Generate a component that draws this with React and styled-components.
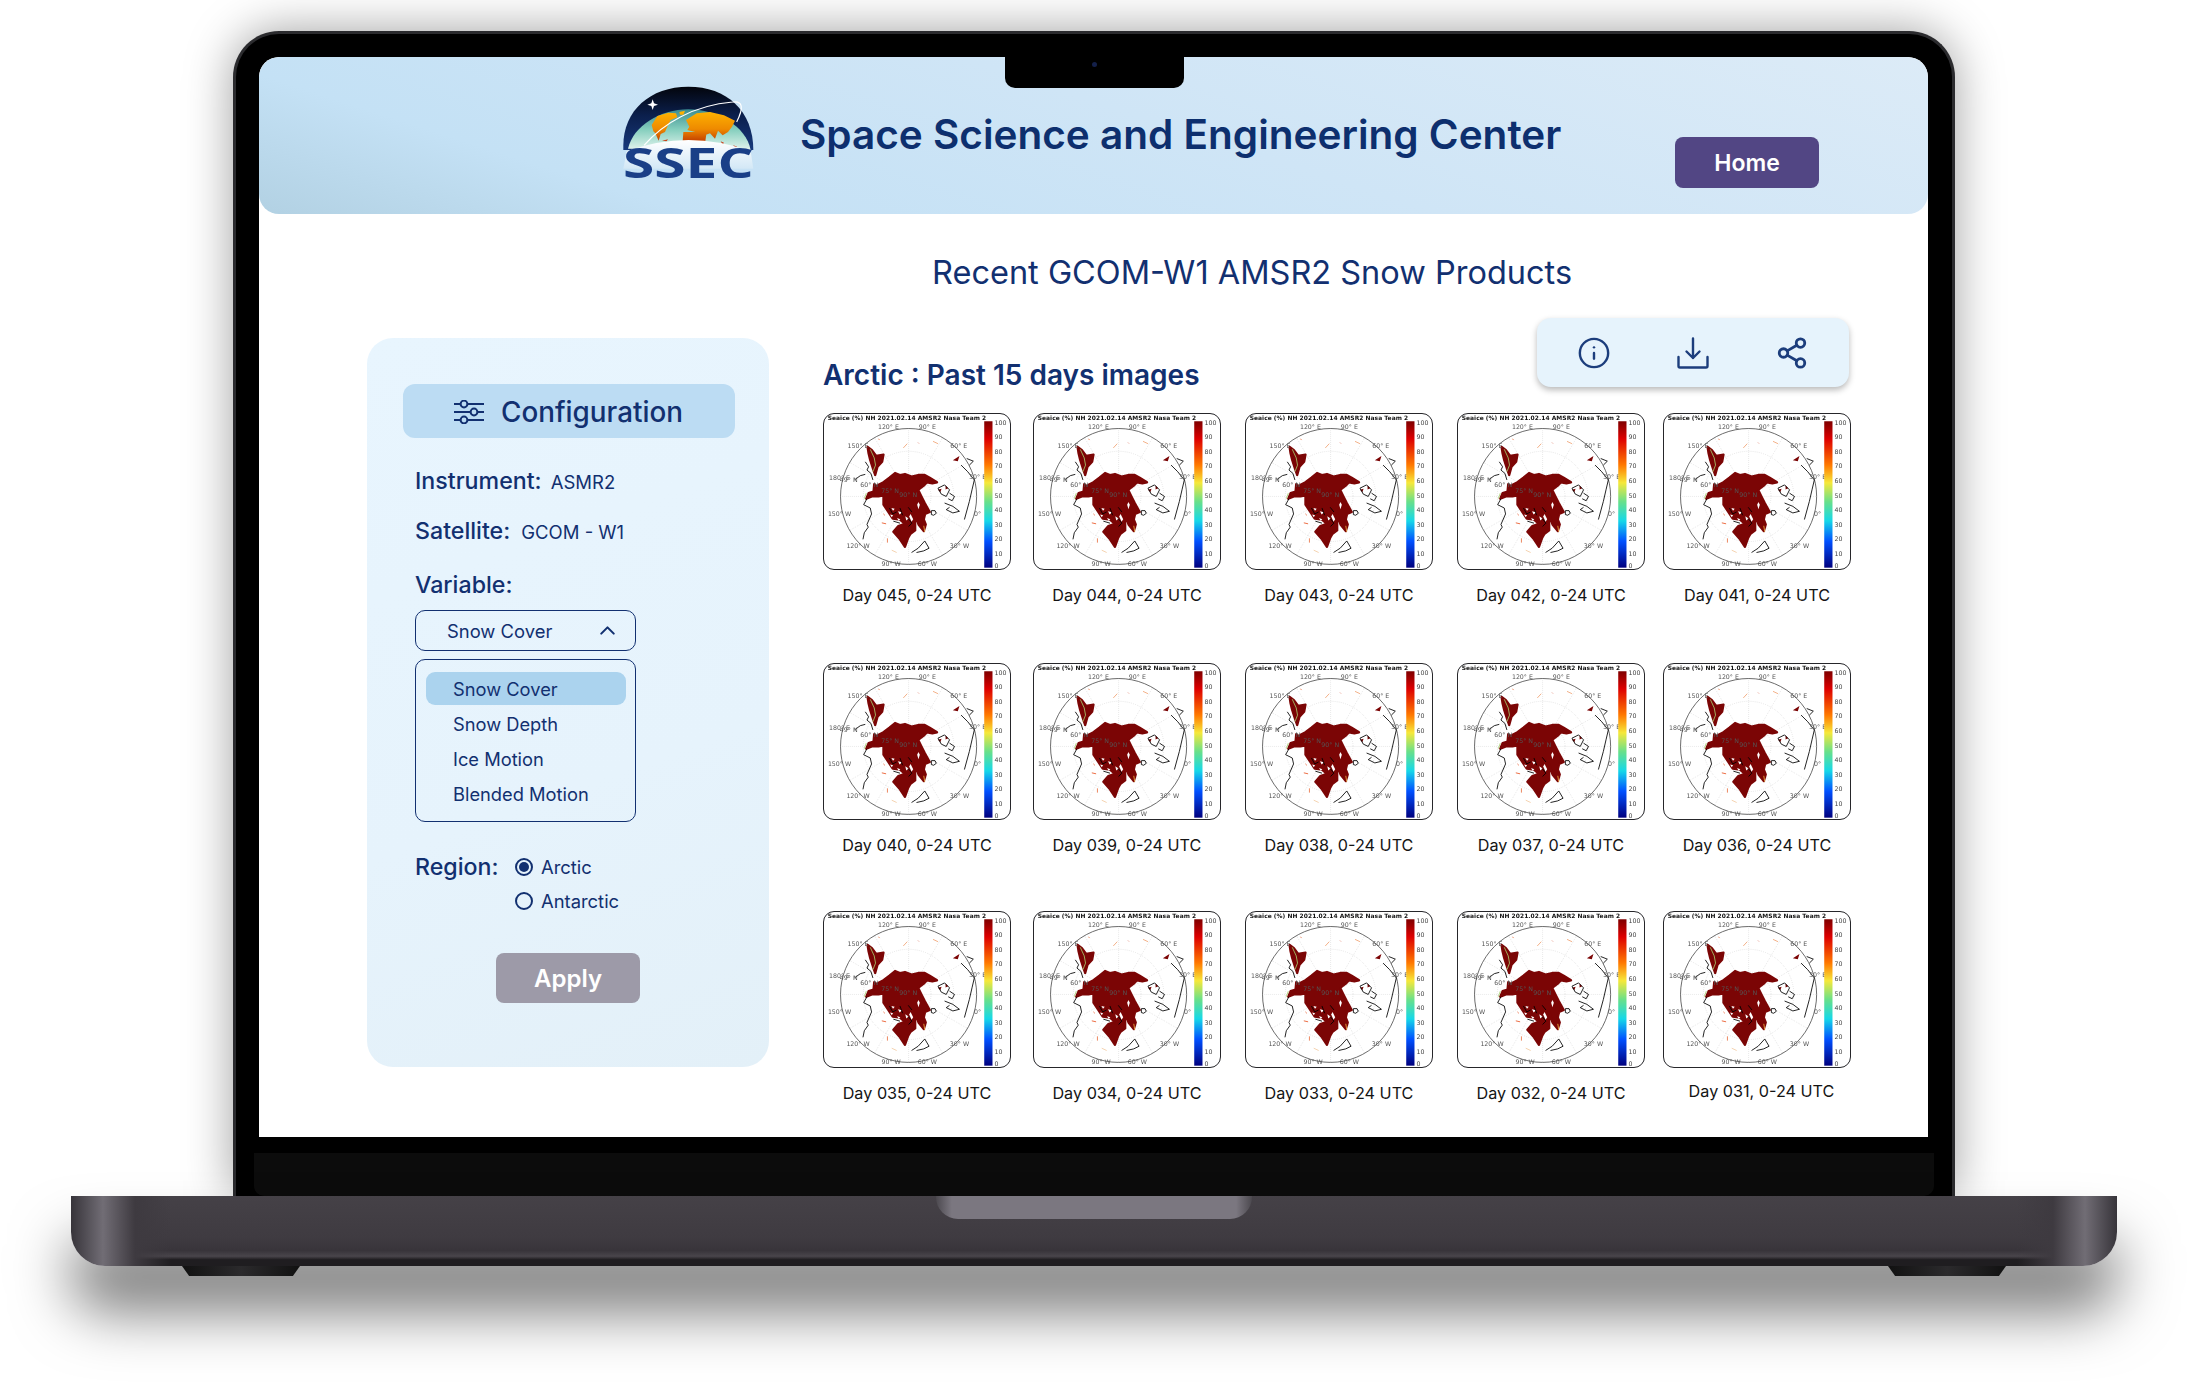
import React from 'react';
import styled, { createGlobalStyle } from 'styled-components';
import { Info, Share2, ChevronUp } from 'lucide-react';

const GlobalStyle = createGlobalStyle`
  html, body {
    margin: 0;
    padding: 0;
    background: #ffffff;
  }
  * {
    box-sizing: border-box;
  }
`;

const Page = styled.div`
  width: 2188px;
  height: 1387px;
  padding-top: 31px;
  overflow: hidden;
  display: flex;
  flex-direction: column;
  align-items: center;
  background: #ffffff;
  font-family: Inter, 'Liberation Sans', sans-serif;
`;

const Lid = styled.div`
  position: relative;
  width: 1722px;
  height: 1165px;
  padding: 23px 23px 0;
  display: flex;
  flex-direction: column;
  background: #000000;
  border: 3px solid #2b2b2e;
  border-bottom: 0;
  border-radius: 46px 46px 0 0;
  box-shadow: 0 0 48px rgba(0, 0, 0, 0.38);
`;

const Notch = styled.div`
  position: absolute;
  top: 23px;
  left: 769px;
  width: 179px;
  height: 31px;
  display: flex;
  justify-content: center;
  padding-top: 5px;
  background: #000000;
  border-radius: 0 0 10px 10px;
  z-index: 2;
`;

const Camera = styled.div`
  width: 5px;
  height: 5px;
  border-radius: 50%;
  background: #14204a;
`;

const Screen = styled.div`
  width: 1669px;
  height: 1080px;
  flex: none;
  overflow: hidden;
  background: #ffffff;
  border-radius: 20px 20px 0 0;
`;

const Chin = styled.div`
  flex: 1;
  margin: 0 -5px;
  background: linear-gradient(#000000 16px, #0c0c0c 16px);
  border-radius: 0 0 10px 10px;
`;

const Base = styled.div`
  position: relative;
  width: 2046px;
  height: 70px;
  flex: none;
  display: flex;
  justify-content: center;
  background:
    linear-gradient(90deg, #37343a 0, #716d75 32px, #3e3a40 64px, rgba(62, 58, 64, 0) 100px),
    linear-gradient(270deg, #37343a 0, #716d75 32px, #3e3a40 64px, rgba(62, 58, 64, 0) 100px),
    linear-gradient(#454147 0, #3f3b41 60%, #38343a 78%, #49454b 86%, #1f1d20 91%, #1f1d20 100%);
  border-radius: 0 0 34px 34px;
  box-shadow: 0 46px 58px rgba(0, 0, 0, 0.52);
  z-index: 1;
`;

const Thumb = styled.div`
  width: 316px;
  height: 23px;
  background: linear-gradient(90deg, #4c494f 0, #7b7780 5%, #7b7780 95%, #4c494f 100%);
  border-radius: 0 0 22px 22px;
`;

const Feet = styled.div`
  width: 1824px;
  flex: none;
  display: flex;
  justify-content: space-between;
  z-index: 1;
`;

const Foot = styled.div`
  width: 118px;
  height: 10px;
  background: linear-gradient(90deg, #111 0, #2b2a2c 50%, #111 100%);
  clip-path: polygon(0 0, 100% 0, 94% 100%, 6% 100%);
`;

const Header = styled.header`
  height: 157px;
  display: flex;
  align-items: flex-start;
  background: linear-gradient(18deg, #b2d1e3 0%, #c4e1f5 20%, #cfe5f6 55%, #dcebf7 100%);
  border-radius: 20px;
`;

const LogoMark = styled.svg`
  width: 170px;
  height: 130px;
  margin: 13px 0 0 341px;
  flex: none;
`;

const SiteTitle = styled.h1`
  margin: 51px 0 0 30px;
  width: 721px;
  flex: none;
  white-space: nowrap;
  font-size: 40.5px;
  line-height: 54px;
  font-weight: 600;
  color: #0d2f6e;
`;

const HomeButton = styled.button`
  width: 144px;
  height: 51px;
  margin: 80px 0 0 154px;
  flex: none;
  border: 0;
  border-radius: 8px;
  background: #524684;
  color: #ffffff;
  font-family: inherit;
  font-size: 23px;
  font-weight: 600;
`;

const PageTitle = styled.h2`
  height: 104px;
  margin: 0;
  padding: 40px 0 0 673px;
  font-size: 32.5px;
  line-height: 38px;
  font-weight: 400;
  color: #123070;
  white-space: nowrap;
`;

const Main = styled.main`
  display: flex;
  align-items: flex-start;
  gap: 54px;
  padding-left: 108px;
`;

const Panel = styled.aside`
  width: 402px;
  height: 729px;
  margin-top: 20px;
  padding: 46px 34px 0 36px;
  flex: none;
  display: flex;
  flex-direction: column;
  background: linear-gradient(160deg, #e8f5fe 0%, #e6f3fc 60%, #e3f0f8 100%);
  border-radius: 26px;
  color: #123070;
`;

const PanelTitle = styled.div`
  height: 54px;
  display: flex;
  align-items: center;
  justify-content: center;
  gap: 16px;
  padding: 1px 2px 0 0;
  background: #bcdcf3;
  border-radius: 12px;
  font-size: 27.8px;
  font-weight: 500;
`;

const Fields = styled.div`
  padding: 0 12px;
  display: flex;
  flex-direction: column;
`;

const Row = styled.div`
  height: 30px;
  margin-top: ${(p) => p.$top}px;
  display: flex;
  align-items: center;
  gap: ${(p) => p.$gap || 0}px;
`;

const Label = styled.span`
  font-size: 23.2px;
  font-weight: 500;
  white-space: nowrap;
`;

const Value = styled.span`
  font-size: 18.5px;
  padding-top: 2px;
  white-space: nowrap;
`;

const Select = styled.div`
  width: 221px;
  height: 41px;
  margin-top: 10px;
  padding: 0 15px 0 31px;
  display: flex;
  align-items: center;
  justify-content: space-between;
  border: 1.5px solid #123070;
  border-radius: 10px;
  font-size: 18.4px;
`;

const OptionList = styled.ul`
  width: 221px;
  height: 163px;
  margin: 8px 0 0;
  padding: 12px 0 0 10px;
  list-style: none;
  border: 1.5px solid #123070;
  border-radius: 10px;
`;

const OptionItem = styled.li`
  width: 200px;
  height: ${(p) => (p.$active ? 33 : 35)}px;
  margin-bottom: ${(p) => (p.$active ? 1 : 0)}px;
  padding-left: 27px;
  display: flex;
  align-items: center;
  background: ${(p) => (p.$active ? '#abd3ee' : 'transparent')};
  border-radius: 9px;
  font-size: 18.3px;
  white-space: nowrap;
`;

const RegionRow = styled.div`
  margin-top: 29px;
  display: flex;
`;

const RegionLabel = styled(Label)`
  width: 100px;
  line-height: 32px;
`;

const RegionOptions = styled.div`
  display: flex;
  flex-direction: column;
  gap: 6px;
  padding-top: 2px;
`;

const RegionOption = styled.div`
  height: 28px;
  display: flex;
  align-items: center;
  gap: 8px;
  font-size: 18.4px;
`;

const Radio = styled.span`
  width: 18px;
  height: 18px;
  flex: none;
  display: flex;
  align-items: center;
  justify-content: center;
  border: 2px solid #123070;
  border-radius: 50%;

  &::after {
    content: '';
    width: 10px;
    height: 10px;
    border-radius: 50%;
    background: ${(p) => (p.$checked ? '#123070' : 'transparent')};
  }
`;

const ApplyButton = styled.button`
  width: 144px;
  height: 50px;
  margin: 38px 2px 0 0;
  align-self: center;
  border: 0;
  border-radius: 8px;
  background: #9d9aa8;
  color: #ffffff;
  font-family: inherit;
  font-size: 24px;
  font-weight: 600;
`;

const Content = styled.section`
  width: 1029px;
  flex: none;
`;

const ContentHead = styled.div`
  height: 95px;
  display: flex;
  justify-content: space-between;
  align-items: flex-start;
`;

const SectionTitle = styled.h3`
  margin: 40px 0 0;
  font-size: 28px;
  line-height: 34px;
  font-weight: 600;
  color: #123070;
  white-space: nowrap;
`;

const Toolbar = styled.div`
  width: 312px;
  height: 69px;
  margin-right: 3px;
  padding: 0 40px;
  display: flex;
  align-items: center;
  justify-content: space-between;
  background: #e6f3fc;
  border-radius: 14px;
  box-shadow: 0 3px 6px rgba(0, 0, 0, 0.28);
  color: #1c3d7c;
`;

const Gallery = styled.div`
  display: grid;
  grid-template-columns: 210px 212px 212px 206px 189px;
  grid-template-rows: 250px 248px auto;
`;

const Card = styled.figure`
  margin: 0;
  width: 188px;
`;

const MapFrame = styled.div`
  width: 188px;
  height: 157px;
  overflow: hidden;
  background: #ffffff;
  border: 1.5px solid #26262a;
  border-radius: 11px;

  svg {
    display: block;
    width: 100%;
    height: 100%;
    filter: blur(0.35px);
  }
`;

const Caption = styled.figcaption`
  margin-top: ${(p) => (p.$shift ? 13 : 15)}px;
  padding-left: ${(p) => p.$shift || 0}px;
  height: 20px;
  white-space: nowrap;
  text-align: center;
  font-size: 16.2px;
  line-height: 20px;
  color: #141414;
`;

const LAT_LABELS = [
  ['120° E', 220, 72],
  ['90° E', 338, 72],
  ['60° E', 433, 127],
  ['30° E', 490, 222],
  ['0°', 490, 335],
  ['30° W', 435, 430],
  ['60° W', 338, 485],
  ['90° W', 228, 485],
  ['120° W', 128, 430],
  ['150° W', 72, 335],
  ['180° E', 72, 224],
  ['150° E', 128, 127],
  ['49° N', 100, 232],
  ['60° N', 162, 247],
  ['75° N', 225, 265],
  ['90° N', 280, 277],
];

// traced from the thumbnail, offset by the group's translate
const COAST = [
  'M45 110 L55 125 L50 135 L62 145 L68 165',
  'M12 165 L30 152 L45 148',
  'M60 250 L64 268 L50 300 L54 308 L42 325 L38 345',
  'M50 222 L40 240 L60 250',
  'M265 190 L285 180 L300 195 L290 215 L275 208 L265 190',
  'M285 235 L310 245 L330 260 L310 265 L290 255 L300 248',
  'M300 205 L315 215 L308 228 L296 222',
  'M335 120 L355 140 L375 165 L368 195 L360 230 L345 285',
  'M360 120 L372 108 L352 100',
  'M185 385 L205 372 L225 350 L238 372 L222 380 L200 385',
  'M245 258 L256 258 L260 266 L252 272 L245 270 Z',
  'M118 250 L128 268 L140 262 M150 250 L158 272 M175 248 L186 262',
  'M130 290 L150 296 M175 282 L186 296 L176 306',
];

const ICE_GAPS = [
  'M124 250 L134 252 L129 258 Z',
  'M144 260 L156 263 L149 270 Z',
  'M120 270 L129 272 L125 278 Z',
  'M166 275 L176 282 L169 288 Z',
  'M141 280 L151 284 L146 289 Z',
  'M182 268 L190 284 L185 292 L178 276 Z',
  'M206 232 L210 240 L206 254 L202 240 Z',
];

const SPECKS = [
  ['M160 68 L172 55', '#f0a070'],
  ['M112 342 L112 355', '#e87040'],
  ['M95 295 L108 298', '#e85020'],
  ['M125 378 L140 385', '#f3c9a0'],
  ['M60 72 L72 98 L76 120 L68 140', '#a8d070'],
  ['M205 52 L207 54', '#d04020'],
  ['M250 48 L265 55', '#f0a070'],
  ['M85 40 L88 44', '#e87040'],
  ['M100 268 L104 272', '#e85020'],
  ['M222 304 L225 322', '#f0b040'],
  ['M48 205 L42 222', '#a8d070'],
];

const ArcticMap = () => (
  <svg viewBox="25 25 563 470" preserveAspectRatio="none">
    <defs>
      <linearGradient id="jet" x1="0" y1="0" x2="0" y2="1">
        <stop offset="0" stopColor="#7f0000" />
        <stop offset="0.12" stopColor="#dd0000" />
        <stop offset="0.3" stopColor="#ff7a00" />
        <stop offset="0.42" stopColor="#f6e83a" />
        <stop offset="0.55" stopColor="#68e08a" />
        <stop offset="0.68" stopColor="#16d8e8" />
        <stop offset="0.82" stopColor="#0050ff" />
        <stop offset="1" stopColor="#00007f" />
      </linearGradient>
    </defs>
    <text x="36" y="42" textLength="480" fontFamily="'DejaVu Sans', sans-serif" fontSize="18" fontWeight="700" fill="#111">
      Seaice (%) NH 2021.02.14 AMSR2 Nasa Team 2
    </text>
    <g fill="none" stroke="#bdbdbd" strokeWidth="1.5" strokeDasharray="2 4">
      <circle cx="281" cy="275" r="137" />
      <circle cx="281" cy="275" r="68" />
      <path d="M281 69 V481 M75 275 H487 M178 97 L384 453 M384 97 L178 453 M103 172 L459 378 M459 172 L103 378" />
    </g>
    <circle cx="281" cy="275" r="206" fill="none" stroke="#333" strokeWidth="2.2" />
    <g transform="translate(105 60)">
      <g fill="#7b0505" stroke="#7b0505" strokeWidth="7" strokeLinejoin="round">
        <path d="M48 222 L55 205 L70 200 L72 178 L80 184 L88 178 L100 172 L118 158 L135 144 L150 150 L165 147 L185 155 L205 150 L225 150 L240 158 L262 172 L248 175 L232 172 L222 182 L205 195 L215 215 L225 235 L240 262 L226 268 L222 285 L228 300 L222 320 L206 300 L196 268 L196 285 L196 318 L182 328 L175 340 L165 368 L150 345 L130 322 L145 305 L165 298 L150 285 L128 282 L112 258 L100 240 L100 212 L85 215 L65 215 Z" />
        <path d="M52 65 L65 75 L78 92 L100 88 L96 110 L82 125 L75 150 L68 130 L60 105 L55 85 Z" />
      </g>
      <path fill="#7b0505" d="M310 105 L330 92 L325 108 Z M265 195 L276 192 L272 202 Z M288 182 L296 190 L288 194 Z" />
      <g fill="#ffffff">
        {ICE_GAPS.map((d) => (
          <path key={d} d={d} />
        ))}
      </g>
      <g fill="none" stroke="#000000" strokeWidth="2.6">
        {COAST.map((d) => (
          <path key={d} d={d} />
        ))}
      </g>
      <g fill="none" strokeWidth="2.5">
        {SPECKS.map(([d, color]) => (
          <path key={d} d={d} stroke={color} />
        ))}
      </g>
    </g>
    <g fontFamily="'DejaVu Sans', sans-serif" fontSize="19" fill="#555" textAnchor="middle">
      {LAT_LABELS.map(([label, x, y]) => (
        <text key={label} x={x} y={y}>
          {label}
        </text>
      ))}
    </g>
    <rect x="510" y="47" width="25" height="444" fill="url(#jet)" />
    <g fontFamily="'DejaVu Sans', sans-serif" fontSize="19" fill="#444">
      {[100, 90, 80, 70, 60, 50, 40, 30, 20, 10, 0].map((v, i) => (
        <text key={v} x="541" y={Math.min(57 + i * 44.3, 492)}>
          {v}
        </text>
      ))}
    </g>
  </svg>
);

const Logo = () => (
  <LogoMark viewBox="0 0 510 390">
    <defs>
      <linearGradient id="sky" x1="0" y1="0" x2="0" y2="1">
        <stop offset="0" stopColor="#03050c" />
        <stop offset="0.45" stopColor="#0b1f4c" />
        <stop offset="1" stopColor="#17397c" />
      </linearGradient>
      <linearGradient id="air" x1="0" y1="0" x2="0" y2="1">
        <stop offset="0" stopColor="#3a8c90" />
        <stop offset="0.5" stopColor="#86cfbe" />
        <stop offset="1" stopColor="#e3f4ee" />
      </linearGradient>
      <linearGradient id="land" x1="0" y1="0" x2="0" y2="1">
        <stop offset="0" stopColor="#ffb400" />
        <stop offset="0.6" stopColor="#ee8a00" />
        <stop offset="1" stopColor="#c43f00" />
      </linearGradient>
      <linearGradient id="ground" x1="0" y1="0" x2="0" y2="1">
        <stop offset="0" stopColor="#ffffff" />
        <stop offset="1" stopColor="#d3e8f6" />
      </linearGradient>
    </defs>
    <path d="M70 226 C70 122 150 50 265 50 C380 50 460 122 460 240 L70 240 Z" fill="url(#sky)" />
    <path d="M84 236 C100 168 180 118 265 118 C350 118 438 168 452 240 Z" fill="url(#air)" />
    <path
      fill="url(#land)"
      d="M155 165 L172 138 L205 128 L228 130 L232 142 L212 150 L203 168 L195 186 L182 192 L176 212 L166 190 L160 184 Z M238 126 L255 122 L250 134 L240 134 Z M258 150 L290 130 L330 126 L372 136 L405 152 L396 170 L384 186 L368 196 L354 182 L345 206 L330 190 L318 194 L262 180 L268 170 Z M250 186 L320 186 L316 214 L248 214 Z"
    />
    <path fill="#c9421a" d="M186 212 L204 208 L200 214 Z M362 214 L372 218 L368 224 Z M400 226 L412 230 L402 232 Z" />
    <path d="M80 244 Q265 176 452 244 L460 296 L70 296 Z" fill="url(#ground)" />
    <path d="M132 226 C190 160 280 106 398 96 C428 92 432 112 410 156" fill="none" stroke="#ffffff" strokeWidth="3.5" />
    <path d="M158 88 L162 100 L174 104 L162 108 L158 120 L154 108 L142 104 L154 100 Z" fill="#ffffff" />
    <text
      x="265"
      y="324"
      textAnchor="middle"
      textLength="392"
      lengthAdjust="spacingAndGlyphs"
      fontFamily="'Open Sans', sans-serif"
      fontSize="122"
      fontWeight="700"
      fill="#1a3f87"
    >
      SSEC
    </text>
  </LogoMark>
);

const SlidersIcon = () => (
  <svg width="32" height="24" viewBox="0 0 32 24" fill="none" stroke="#123070" strokeWidth="2">
    <path d="M1 4 H7 M15 4 H31 M1 12 H17 M25 12 H31 M1 20 H7 M15 20 H31" />
    <circle cx="11" cy="4" r="3.4" />
    <circle cx="21" cy="12" r="3.4" />
    <circle cx="11" cy="20" r="3.4" />
  </svg>
);

const DownloadIcon = () => (
  <svg width="32" height="32" viewBox="0 0 32 32" fill="none" stroke="currentColor" strokeWidth="2.4" strokeLinecap="round" strokeLinejoin="round">
    <path d="M16 1.5 V21 M9.5 14.5 L16 21 L22.5 14.5" />
    <path d="M1.5 20 V29 A1.5 1.5 0 0 0 3 30.5 H29 A1.5 1.5 0 0 0 30.5 29 V20" />
  </svg>
);

const DAYS = ['045', '044', '043', '042', '041', '040', '039', '038', '037', '036', '035', '034', '033', '032', '031'];

const App = () => {
  return (
    <Page>
      <GlobalStyle />
      <Lid>
        <Notch>
          <Camera />
        </Notch>
        <Screen>
          <Header>
            <Logo />
            <SiteTitle>Space Science and Engineering Center</SiteTitle>
            <HomeButton>Home</HomeButton>
          </Header>
          <PageTitle>Recent GCOM-W1 AMSR2 Snow Products</PageTitle>
          <Main>
            <Panel>
              <PanelTitle>
                <SlidersIcon />
                Configuration
              </PanelTitle>
              <Fields>
                <Row $top={28} $gap={9}>
                  <Label>Instrument:</Label>
                  <Value>ASMR2</Value>
                </Row>
                <Row $top={20} $gap={11}>
                  <Label>Satellite:</Label>
                  <Value>GCOM - W1</Value>
                </Row>
                <Row $top={24}>
                  <Label>Variable:</Label>
                </Row>
                <Select>
                  Snow Cover
                  <ChevronUp size={25} strokeWidth={2} />
                </Select>
                <OptionList>
                  <OptionItem $active>Snow Cover</OptionItem>
                  <OptionItem>Snow Depth</OptionItem>
                  <OptionItem>Ice Motion</OptionItem>
                  <OptionItem>Blended Motion</OptionItem>
                </OptionList>
                <RegionRow>
                  <RegionLabel>Region:</RegionLabel>
                  <RegionOptions>
                    <RegionOption>
                      <Radio $checked />
                      Arctic
                    </RegionOption>
                    <RegionOption>
                      <Radio />
                      Antarctic
                    </RegionOption>
                  </RegionOptions>
                </RegionRow>
              </Fields>
              <ApplyButton>Apply</ApplyButton>
            </Panel>
            <Content>
              <ContentHead>
                <SectionTitle>Arctic : Past 15 days images</SectionTitle>
                <Toolbar>
                  <Info size={34} strokeWidth={1.7} />
                  <DownloadIcon />
                  <Share2 size={34} strokeWidth={2} />
                </Toolbar>
              </ContentHead>
              <Gallery>
                {DAYS.map((day) => (
                  <Card key={day}>
                    <MapFrame>
                      <ArcticMap />
                    </MapFrame>
                    <Caption $shift={day === '031' ? 9 : 0}>Day {day}, 0-24 UTC</Caption>
                  </Card>
                ))}
              </Gallery>
            </Content>
          </Main>
        </Screen>
        <Chin />
      </Lid>
      <Base>
        <Thumb />
      </Base>
      <Feet>
        <Foot />
        <Foot />
      </Feet>
    </Page>
  );
};

export default App;
